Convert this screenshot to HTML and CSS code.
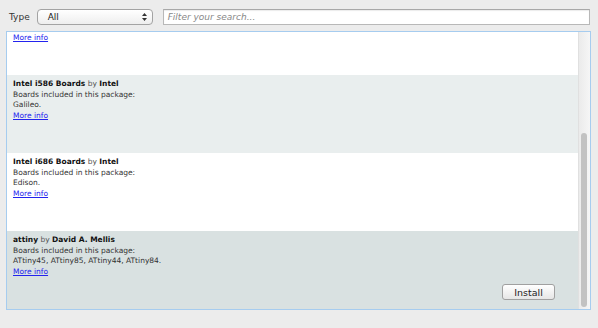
FILE: index.html
```html
<!DOCTYPE html>
<html lang="en">
<head>
  <meta charset="UTF-8">
  <title>Boards Manager</title>
  <link rel="stylesheet" href="styles.css">
</head>
<body>
<div class="toolbar">
  <span class="label">Type</span>
  <div class="select">
    <span>All</span>
    <svg class="arrows" width="5" height="8" viewBox="0 0 5 8">
      <path d="M2.5 0 L5 3 L0 3 Z M0 5 L5 5 L2.5 8 Z" fill="#333"/>
    </svg>
  </div>
  <div class="search">Filter your search...</div>
</div>

<div class="panel">
  <div class="list">
    <div class="list-inner">
      <!-- partly scrolled out of view -->
      <div class="row">
        <div class="title"><b>Arduino SAMD Boards (32-bits ARM Cortex-M0+)</b> by <b>Arduino</b></div>
        <div>Boards included in this package:</div>
        <div>Arduino Zero.</div>
        <a href="#">More info</a>
        <div class="actions"><button class="btn">Install</button></div>
      </div>

      <div class="row alt">
        <div class="title"><b>Intel i586 Boards</b> by <b>Intel</b></div>
        <div>Boards included in this package:</div>
        <div>Galileo.</div>
        <a href="#">More info</a>
        <div class="actions"><button class="btn">Install</button></div>
      </div>

      <div class="row">
        <div class="title"><b>Intel i686 Boards</b> by <b>Intel</b></div>
        <div>Boards included in this package:</div>
        <div>Edison.</div>
        <a href="#">More info</a>
        <div class="actions"><button class="btn">Install</button></div>
      </div>

      <div class="row selected">
        <div class="title"><b>attiny</b> by <b>David A. Mellis</b></div>
        <div>Boards included in this package:</div>
        <div>ATtiny45, ATtiny85, ATtiny44, ATtiny84.</div>
        <a href="#">More info</a>
        <div class="actions"><button class="btn">Install</button></div>
      </div>
    </div>
  </div>
  <div class="scrollbar">
    <div class="thumb"></div>
  </div>
</div>
</body>
</html>
```

FILE: styles.css
```css
body {
    margin: 0;
    background: #ececec;
    font-family: 'DejaVu Sans', Verdana, sans-serif;
    color: #333;
    height: 328px;
    overflow: hidden;
}
.toolbar {
    display: flex;
    align-items: center;
    height: 16px;
    padding: 9px 8px 0 9px;
    font-size: 9px;
}
.label {
    margin-right: 7px;
    color: #333;
}
.select {
    width: 116px;
    height: 16px;
    box-sizing: border-box;
    border: 1px solid #a3a3a3;
    border-radius: 4px;
    background: linear-gradient(#ffffff, #eeeeee);
    display: flex;
    align-items: center;
    justify-content: space-between;
    padding: 0 5px 0 10px;
    margin-right: 10px;
    color: #222;
}
.search {
    flex: 1;
    height: 16px;
    box-sizing: border-box;
    border: 1px solid #b8b8b8;
    border-top-color: #a8a8a8;
    background: #fff;
    box-shadow: inset 0 1px 1px rgba(0,0,0,0.08);
    font-style: italic;
    color: #888;
    line-height: 14px;
    padding-left: 4px;
}
.panel {
    margin: 6px 7px 0 6px;
    height: 277px;
    border: 1px solid #a6ccef;
    display: flex;
    background: #fff;
}
.list {
    flex: 1;
    overflow: hidden;
}
.list-inner {
    margin-top: -35px;
}
.row {
    background: #fff;
    padding: 4px 6px 9px 6px;
    font-size: 7.5px;
    line-height: 10.5px;
    color: #333;
}
.row.alt { background: #e9eeee; }
.row.selected { background: #d9e1e1; }
.title { color: #555; }
.title b { color: #111; }
.row a {
    color: #2323ee;
    text-decoration: underline;
}
.actions {
    display: flex;
    justify-content: flex-end;
    margin-top: 7px;
    padding-right: 17px;
    height: 16px;
    visibility: hidden;
}
.row.selected .actions { visibility: visible; }
.btn {
    width: 53px;
    height: 16px;
    padding: 0;
    border: 1px solid #a0a0a0;
    border-radius: 3px;
    background: linear-gradient(#ffffff, #e6e6e6);
    font-family: 'DejaVu Sans', Verdana, sans-serif;
    font-size: 9.5px;
    color: #222;
}
.scrollbar {
    width: 12px;
    background: linear-gradient(90deg, #ebebeb, #f6f6f6);
    border-left: 1px solid #e0e0e0;
    box-sizing: border-box;
    padding: 101px 3px 1px 2px;
}
.thumb {
    height: 174px;
    background: #c2c2c2;
    border-radius: 4px;
}
```
